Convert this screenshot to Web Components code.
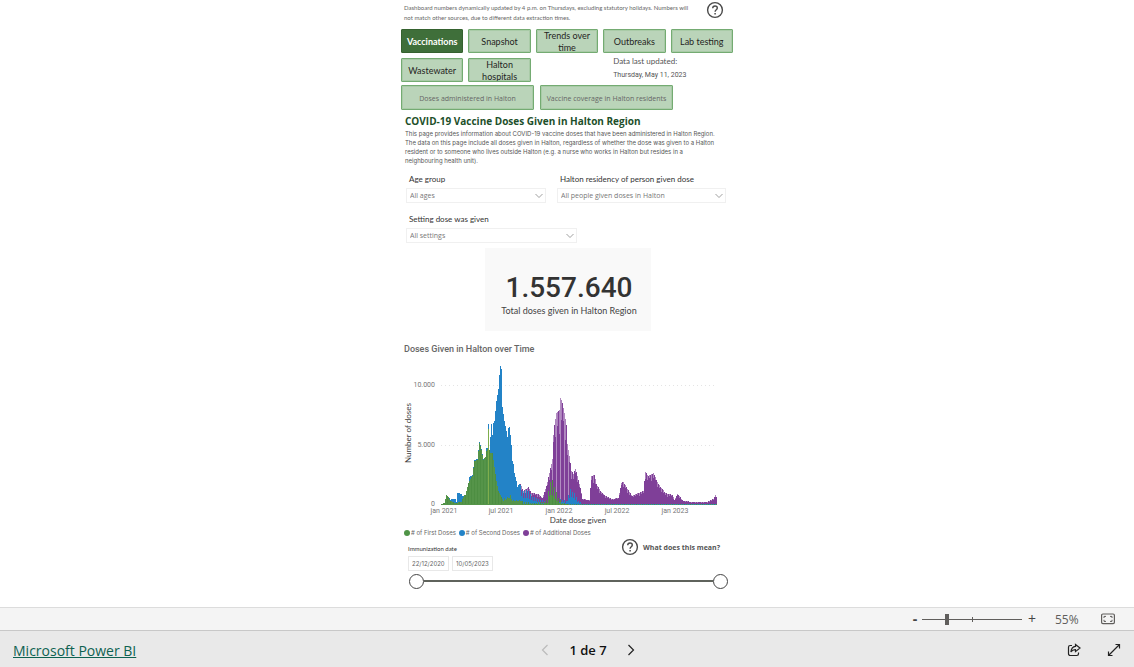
<!DOCTYPE html>
<html lang="en">
<head>
<meta charset="utf-8">
<title>Halton Region COVID-19 dashboard</title>
<style>
body{margin:0;background:#fff;font-family:"Open Sans","Noto Sans",sans-serif;color:#555;--narrow:Lato,"Open Sans",sans-serif;--small:Inter,"Open Sans",sans-serif}
</style>
</head>
<body>
<report-app></report-app>
<script>
const define=(name,html,setup)=>customElements.define(name,class extends HTMLElement{
  constructor(){
    super();
    const t=document.createElement('template');
    t.innerHTML='<style>*{box-sizing:border-box}button,input,select{font-family:inherit;margin:0}</style>'+html;
    this.attachShadow({mode:'open'}).append(t.content.cloneNode(true));
  }
  connectedCallback(){ if(setup) setup(this.shadowRoot,this); }
});

define('help-icon',`<style>:host{display:block;width:18px;height:18px;flex:none}button{display:block;width:18px;height:18px;padding:0;border:0;background:none}svg{display:block}</style>
<button aria-label="Help"><svg width="18" height="18" viewBox="0 0 18 18" fill="none" stroke="#4a4a4a"><circle cx="9" cy="9" r="7.4" stroke-width="1.4"/><path d="M6.7 7.3C6.7 5.7 7.7 5 9 5s2.3.8 2.3 2.1c0 1.7-2.2 1.7-2.2 3.7" stroke-width="1.4"/><path d="M9.1 11.9v1.5" stroke-width="1.5"/></svg></button>`);

define('tab-button',`<style>:host{display:block;height:24px;font-family:var(--narrow)}
button{display:flex;align-items:center;justify-content:center;width:100%;height:100%;padding:1px 2px 0;background:#bad4b9;border:1px solid #74ab72;box-shadow:inset 0 0 0 1px #a9cba7;border-radius:1px;color:#252423;font-size:9px;line-height:12px;text-align:center;overflow:hidden}
:host([active]) button{background:#3f6f3a;border-color:#35622f;box-shadow:none;color:#fff;font-weight:700}
:host([sub]){height:25px;font-family:"Open Sans",sans-serif}
:host([sub]) button{color:#666;font-size:7px;white-space:nowrap;padding-top:2px}</style>
<button><slot></slot></button>`);

define('filter-select',`<style>:host{display:block}
label{display:block;padding-left:3px;font:8px/10px var(--narrow);margin-bottom:4px;color:#333;white-space:nowrap}
div{position:relative}
select{appearance:none;display:block;width:100%;height:15px;border:1px solid #f0f0f0;border-radius:0;background:#fff;color:#777;font-size:7px;padding:0 12px 0 3px}
svg{position:absolute;right:3px;top:5px;pointer-events:none}</style>
<label for="s"></label><div><select id="s"><option></option></select><svg width="8" height="6" viewBox="0 0 8 6" fill="none" stroke="#888" stroke-width=".8"><path d="M.5 1 4 4.5 7.5 1"/></svg></div>`,
(r,h)=>{r.querySelector('label').textContent=h.getAttribute('label');r.querySelector('option').textContent=h.getAttribute('value');});

define('total-card',`<style>:host{display:block;width:166px;height:83px;background:#f9f9f9;text-align:center;padding:24px 0 0 2px}
b{display:block;font:500 28px/32px Roboto,sans-serif;color:#333}
span{display:block;font:9px/14px var(--narrow);color:#444}</style>
<b>1.557.640</b><span><slot></slot></span>`);

define('dose-chart',`<style>:host{display:block}
h2{margin:0;padding-left:3px;font:500 9px/12px Roboto,sans-serif;color:#666}
svg{display:block;width:100%;margin-top:3px}
text{font:7px Roboto,sans-serif;fill:#777}
.axis{font:8px var(--narrow);fill:#404040}
ul{display:flex;gap:3px;list-style:none;margin:0;padding:0 3px;font:6px/10px var(--small);color:#666}
li{display:flex;align-items:center;white-space:nowrap}
li::before{content:"";width:6px;height:6px;border-radius:3px;background:var(--c);margin-right:1px}</style>
<h2>Doses Given in Halton over Time</h2>
<svg viewBox="0 0 332 170">
<g stroke="#e4e4e4" stroke-dasharray="1 3"><path d="M40 27.5H316M40 87.5H316"/></g>
<g id="bars" shape-rendering="crispEdges"></g>
<g text-anchor="end"><text x="34" y="29">10.000</text><text x="34" y="89">5.000</text><text x="34" y="148">0</text></g>
<g text-anchor="middle"><text x="43" y="155">jan 2021</text><text x="100" y="155">jul 2021</text><text x="158" y="155">jan 2022</text><text x="216" y="155">jul 2022</text><text x="274" y="155">jan 2023</text>
<text class="axis" x="177" y="165">Date dose given</text><text class="axis" transform="translate(10 75) rotate(-90)">Number of doses</text></g>
</svg>
<ul><li style="--c:#4f9447"># of First Doses</li><li style="--c:#2383c7"># of Second Doses</li><li style="--c:#7f3f98"># of Additional Doses</li></ul>`,
r=>{
  const total=[[0,1],[3,2],[5,10],[7,8],[9,5],[11,6],[14,6],[15,3],[16,12],[20,11],[21,9],[24,10],[27,22],[28,28],[31,30],[33,45],[36,46],[38,63],[40,56],[42,46],[44,48],[45,57],[46,57],[47,81],[48,55],[50,81],[51,70],[52,82],[53,84],[55,104],[57,116],[58,130],[59,139],[60,136],[61,98],[63,84],[65,74],[68,78],[69,70],[71,49],[73,32],[76,20],[79,21],[82,14],[87,18],[90,12],[97,11],[101,7],[105,19],[108,32],[111,46],[112,70],[113,80],[115,92],[118,95],[119,107],[121,102],[123,92],[125,80],[126,61],[128,49],[130,34],[132,31],[134,36],[136,29],[139,17],[141,6],[148,5],[150,29],[153,30],[155,21],[159,14],[164,9],[171,6],[177,7],[180,22],[182,23],[186,16],[191,9],[197,12],[202,14],[204,33],[207,29],[212,32],[217,21],[224,12],[231,10],[233,5],[236,11],[242,4],[252,3],[266,3],[272,6],[274,10],[275,8]];
  const second=[[0,1],[5,8],[16,12],[20,11],[79,20],[82,14],[86,15],[90,9],[97,6],[105,3],[111,9],[119,6],[125,4],[129,16],[133,12],[137,4],[141,1],[275,1]];
  const first=[[0,1],[3,2],[5,10],[7,8],[9,4],[14,2],[20,3],[22,8],[24,13],[27,22],[29,26],[31,29],[33,44],[36,45],[38,62],[40,55],[42,45],[45,54],[47,57],[49,52],[51,52],[53,38],[55,24],[57,14],[60,8],[62,4],[69,8],[71,4],[80,4],[90,2],[103,3],[106,6],[108,22],[111,25],[113,18],[117,7],[121,2],[128,1],[275,1]];
  const at=(pts,x)=>{for(let i=1;i<pts.length;i++)if(x<=pts[i][0]){const[a,b]=pts[i-1],[c,d]=pts[i];return b+(d-b)*(x-a)/(c-a)}return 0};
  const noise=x=>((x*7919+13)%17)/17;
  let s='';
  const bar=(x,y,h,c,o=1)=>{if(h>0)s+='<rect x="'+(x+40)+'" y="'+(147-y-h)+'" width="1" height="'+h+'" fill="'+c+'" opacity="'+o+'"/>'};
  for(let x=0;x<=275;x++){
    const t=Math.round(at(total,x)), dip=x%2?0:1;
    const b=x<79?t:Math.round(Math.min(at(second,x),t)*(dip?.5:1)), f=Math.round(Math.min(at(first,x),t)*(x>80&&dip?.4:1));
    if(x>=79){
      const weak=x>110&&x<128&&x%4===3;
      const low=Math.round(t*(dip?.9-noise(x)*.16:1));
      bar(x,0,low,'#7f3f98',weak?.6:1);
      if(low<t)bar(x,low,t-low,'#7f3f98',.65);
    }
    const cut=x>62&&x%5===1?Math.round(b*.9):b;
    bar(x,0,cut,'#2383c7');
    bar(x,0,f,x%3?'#559449':'#4d8e42');
    if(x>60&&x<80&&x%3===0)bar(x,0,Math.round(f*1.3),'#559449');
  }
  s+='<rect x="87" y="71" width="1" height="76" fill="#7fae4d"/><rect x="40" y="146" width="80" height="1" fill="#559449"/>';
  r.getElementById('bars').innerHTML=s;
});

define('date-range',`<style>:host{display:block;padding:0 5px 0 7px}
.top{display:flex;justify-content:space-between;height:28px}
h3{margin:0;font:6px/10px var(--narrow);color:#333;padding-top:6px}
.ask{display:flex;gap:4px;align-items:center;height:18px;font-size:7px;font-weight:700;color:#555;padding-right:8px}
.dates{display:flex;gap:3px;margin-top:-10px}
.dates input{width:41px;height:15px;border:1px solid #e8e8e8;padding:0 2px 0 3px;font:6px var(--small);color:#666}
.slider{position:relative;height:16px;margin:2px 0 0 1px}
.slider::before{content:"";position:absolute;left:15px;right:15px;top:7px;height:2px;background:#5f635c}
.slider input{position:absolute;inset:0;width:100%;height:16px;appearance:none;background:none;pointer-events:none}
.slider input::-webkit-slider-thumb{appearance:none;width:15px;height:15px;border:1px solid #444;border-radius:50%;background:#fff;pointer-events:auto}</style>
<div class="top"><h3>Immunization date</h3><div class="ask"><help-icon></help-icon><span>What does this mean?</span></div></div>
<div class="dates"><input aria-label="Start date" value="22/12/2020"><input aria-label="End date" value="10/05/2023"></div>
<div class="slider"><input type="range" aria-label="Range start" value="0"><input type="range" aria-label="Range end" value="100"></div>`);

define('report-page',`<style>:host{display:block;width:332px;margin:0 auto;flex:1;padding-top:1px}
.note{display:flex;justify-content:space-between;padding:0 9px 0 3px;height:28px}
.note p{margin:0;padding-top:2px;font:6px/10px var(--narrow);color:#666;white-space:nowrap}
.tabs{display:grid;grid-template-columns:repeat(5,1fr);gap:5px}
.date{grid-column:4/6;padding-left:10px;font:8px/14px var(--narrow);color:#555;margin-top:-4px}
.date span{display:block}.date span+span{font:7px/14px Roboto,sans-serif}
.subs{display:grid;grid-template-columns:133px 133px;gap:6px;margin-top:3px}
h1{margin:5px 0 0;padding-left:4px;font-size:10px;line-height:13px;color:#1d4f2a;white-space:nowrap}
.intro{margin:0;padding:1px 0 0 4px;font:6px/9px var(--small);color:#555;height:46px;white-space:nowrap}
.filters{display:grid;grid-template-columns:140px 169px;gap:11px;padding-left:5px}
.filters :last-child{grid-column:1/3;width:171px}
total-card{margin:5px 82px 12px 84px}</style>
<div class="note"><p>Dashboard numbers dynamically updated by 4 p.m. on Thursdays, excluding statutory holidays. Numbers will<br>not match other sources, due to different data extraction times.</p><help-icon></help-icon></div>
<div class="tabs"><tab-button active>Vaccinations</tab-button><tab-button>Snapshot</tab-button><tab-button>Trends over time</tab-button><tab-button>Outbreaks</tab-button><tab-button>Lab testing</tab-button><tab-button>Wastewater</tab-button><tab-button>Halton hospitals</tab-button><div class="date"><span>Data last updated:</span><span>Thursday, May 11, 2023</span></div></div>
<div class="subs"><tab-button sub>Doses administered in Halton</tab-button><tab-button sub>Vaccine coverage in Halton residents</tab-button></div>
<h1>COVID-19 Vaccine Doses Given in Halton Region</h1>
<p class="intro">This page provides information about COVID-19 vaccine doses that have been administered in Halton Region.<br>The data on this page include all doses given in Halton, regardless of whether the dose was given to a Halton<br>resident or to someone who lives outside Halton (e.g. a nurse who works in Halton but resides in a<br>neighbouring health unit).</p>
<div class="filters"><filter-select label="Age group" value="All ages"></filter-select><filter-select label="Halton residency of person given dose" value="All people given doses in Halton"></filter-select><filter-select label="Setting dose was given" value="All settings"></filter-select></div>
<total-card>Total doses given in Halton Region</total-card>
<dose-chart></dose-chart>
<date-range></date-range>`);

define('zoom-bar',`<style>:host{display:flex;align-items:center;justify-content:flex-end;height:23px;background:#f4f4f4;border-top:1px solid #dcdcdc;padding-right:19px;color:#605e5c;font-size:12px}
button{border:0;background:none;padding:0;width:14px;height:20px;font-size:14px;line-height:18px;color:#444}
button:first-of-type{width:8px;font-weight:700}
.track{position:relative;width:100px;height:12px;margin:0 3px}
.track::before{content:"";position:absolute;left:50px;top:4px;width:1px;height:5px;background:#605e5c}
input{appearance:none;display:block;width:100px;height:12px;background:linear-gradient(#605e5c,#605e5c) 0 6px/100% 1px no-repeat}
input::-webkit-slider-thumb{appearance:none;width:4px;height:11px;background:#605e5c}
output{width:24px;margin:0 22px 0 16px}
.fit{width:14px;height:12px}svg{display:block}</style>
<button aria-label="Zoom out">-</button><div class="track"><input type="range" aria-label="Zoom" min="0" max="100" value="24"></div><button aria-label="Zoom in">+</button><output>55%</output>
<button class="fit" aria-label="Fit to page"><svg width="14" height="12" viewBox="0 0 14 12" fill="none" stroke="#605e5c"><rect x=".6" y="1" width="12.8" height="9.6" rx="1.3" stroke-width="1.2"/><path d="M3 5V3.4h2M9 3.4h2V5M11 6.8v1.6H9M5 8.4H3V6.8"/></svg></button>`);

define('page-bar',`<style>:host{display:grid;grid-template-columns:1fr auto 1fr;align-items:center;height:37px;background:#e9e9e9;border-top:1px solid #c8c8c8;padding:2px 13px 0;color:#111}
a{font-size:14px;color:#0e6251;justify-self:start}
nav{display:flex;align-items:center;gap:20px;margin-left:42px;font-size:13px;font-weight:600}
button{border:0;background:none;padding:0;width:14px;height:14px}svg{display:block;fill:none;stroke:#222;stroke-width:1.2}
.prev svg{stroke:#bbb}
nav button{width:8px}
.tools{display:flex;gap:26px;justify-self:end}</style>
<a href="#">Microsoft Power BI</a>
<nav><button class="prev" aria-label="Previous page"><svg width="8" height="14" viewBox="0 0 8 14"><path d="M6.5 2 1.5 7l5 5"/></svg></button><span>1 de 7</span><button aria-label="Next page"><svg width="8" height="14" viewBox="0 0 8 14"><path d="m1.5 2 5 5-5 5"/></svg></button></nav>
<div class="tools"><button aria-label="Share"><svg width="14" height="14" viewBox="0 0 14 14"><path d="M5 2.5H3.2A1.7 1.7 0 0 0 1.5 4.2v6.6a1.7 1.7 0 0 0 1.7 1.7h6.6a1.7 1.7 0 0 0 1.7-1.7V9.5"/><path d="M8.5 1.5 13 5 8.5 8.6V6.7C6.3 6.6 5 7.3 3.9 9 4.2 5.6 5.8 3.7 8.5 3.4z"/></svg></button><button aria-label="Full screen"><svg width="14" height="14" viewBox="0 0 14 14"><path d="M1.5 12.5l11-11M8.5 1.5h4v4M1.5 8.5v4h4"/></svg></button></div>`);

define('report-app',`<style>:host{display:flex;flex-direction:column;min-height:100vh}</style><report-page></report-page><zoom-bar></zoom-bar><page-bar></page-bar>`);
</script>
</body>
</html>
